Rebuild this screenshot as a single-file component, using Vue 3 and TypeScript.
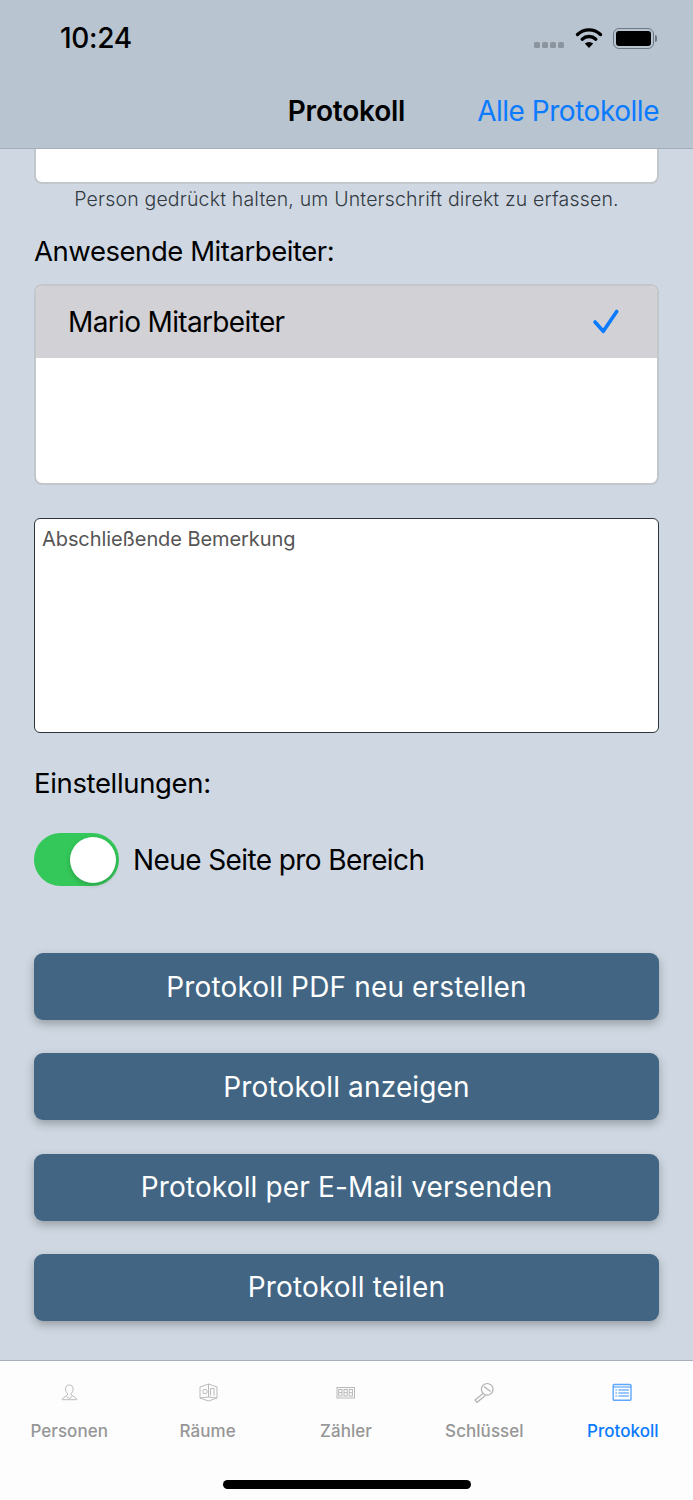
<script setup lang="ts">
const buttons = [
  'Protokoll PDF neu erstellen',
  'Protokoll anzeigen',
  'Protokoll per E-Mail versenden',
  'Protokoll teilen',
]

const tabs = [
  { key: 'person', label: 'Personen' },
  { key: 'room', label: 'Räume' },
  { key: 'meter', label: 'Zähler' },
  { key: 'key', label: 'Schlüssel' },
  { key: 'log', label: 'Protokoll' },
]
</script>

<template>
  <div class="screen">
    <header class="topbar">
      <div class="status">
        <span class="time">10:24</span>
        <div class="status__icons">
          <div class="signal"><i /><i /><i /><i /></div>
          <svg class="wifi" width="28" height="22" viewBox="0 0 28 22">
            <path d="M2.5 7.5a16.5 16.5 0 0 1 23 0" fill="none" stroke="#000" stroke-width="3.4" stroke-linecap="round" />
            <path d="M7.2 12.2a10 10 0 0 1 13.6 0" fill="none" stroke="#000" stroke-width="3.4" stroke-linecap="round" />
            <path d="M14 21l-4.2-4.4a6 6 0 0 1 8.4 0z" fill="#000" />
          </svg>
          <div class="battery"><div class="battery__fill" /></div>
          <div class="battery__cap" />
        </div>
      </div>
      <div class="navbar">
        <span class="navbar__title">Protokoll</span>
        <span class="navbar__action">Alle Protokolle</span>
      </div>
    </header>

    <main class="content">
      <div class="sign-box" />
      <p class="hint">Person gedrückt halten, um Unterschrift direkt zu erfassen.</p>

      <h2 class="label label--staff">Anwesende Mitarbeiter:</h2>
      <div class="list">
        <div class="list__row">
          <span>Mario Mitarbeiter</span>
          <svg width="30" height="30" viewBox="0 0 30 30">
            <path d="M5 15l8.300 9.300L26.700 4.500" fill="none" stroke="#0a7aff" stroke-width="3.600" stroke-linecap="round" stroke-linejoin="round" />
          </svg>
        </div>
      </div>

      <div class="remark">Abschließende Bemerkung</div>

      <h2 class="label label--settings">Einstellungen:</h2>
      <div class="setting">
        <div class="toggle"><div class="toggle__knob" /></div>
        <span>Neue Seite pro Bereich</span>
      </div>

      <div class="actions">
        <button v-for="b in buttons" :key="b" class="action" type="button">{{ b }}</button>
      </div>
    </main>

    <footer class="tabbar">
      <nav class="tabs">
        <div v-for="t in tabs" :key="t.key" class="tab" :class="{ 'tab--active': t.key === 'log' }">
          <svg class="tab__icon" width="28" height="28" viewBox="0 0 28 28" fill="none" stroke="currentColor" stroke-width="0.900">
            <template v-if="t.key === 'person'">
              <path d="M10.500 11c0-2.500 1.500-4 3.800-4s3.800 1.500 3.800 4c0 2-.8 3.500-1.800 4.500v1.500l4.500 3c.6.400.9 1 .9 1.700H7.300c0-.7.300-1.300.9-1.700l4.300-3v-1.500c-1-1-2-2.500-2-4.500z" />
              <path d="M11.500 18.500l2.800 2 2.800-2" />
            </template>
            <template v-else-if="t.key === 'room'">
              <path d="M14.500 6l8.500 3v11l-8.500 3-8.500-3V9z" />
              <path d="M14.500 6v13M6 20l8.500-1 8.500 1" />
              <circle cx="11" cy="13.500" r="2.200" />
              <path d="M16.500 17.500v-7h3.500v7" />
            </template>
            <template v-else-if="t.key === 'meter'">
              <rect x="5" y="9.500" width="17.500" height="10.500" />
              <rect x="6.800" y="11.500" width="3.200" height="6.500" />
              <rect x="12" y="11.500" width="3.200" height="6.500" />
              <rect x="17.200" y="11.500" width="3.200" height="6.500" />
              <path d="M6.800 14.700h3.200M12 14.700h3.200M17.200 14.700h3.200" />
            </template>
            <template v-else-if="t.key === 'key'">
              <circle cx="17.200" cy="11.300" r="5.800" stroke-width="1.200" />
              <path d="M14 8.500l6.500 5" stroke-width="1.200" />
              <path d="M13 15.500l-8 6.500 2 2.300 8.500-6.800" stroke-width="1.200" />
            </template>
            <template v-else>
              <rect x="4.200" y="6.500" width="17.800" height="15.800" rx="1" stroke-width="1.400" opacity="0.65" />
              <path d="M4.200 9H22" stroke-width="1.200" opacity="0.65" />
              <path d="M9.400 12h10.500M9.400 15h10.500M9.400 18h10.500M6.400 12h1.500M6.400 15h1.500M6.400 18h1.500" stroke-width="1.400" opacity="0.55" />
            </template>
          </svg>
          <span class="tab__label">{{ t.label }}</span>
        </div>
      </nav>
      <div class="home-bar" />
    </footer>
  </div>
</template>

<style scoped>
.screen {
  display: flex;
  flex-direction: column;
  width: 693px;
  height: 1500px;
  overflow: hidden;
  background: #cfd8e2;
  font-family: Inter, "Liberation Sans", sans-serif;
  color: #000;
}

.topbar {
  flex: none;
  height: 149px;
  box-sizing: border-box;
  background: #b8c4d0;
  border-bottom: 1px solid #a5afba;
}

.status {
  display: flex;
  align-items: center;
  justify-content: space-between;
  height: 76px;
  padding: 0 36px 0 60px;
}

.time {
  font-size: 28px;
  font-weight: 500;
  letter-spacing: -0.3px;
}

.status__icons {
  display: flex;
  align-items: center;
}

.signal {
  display: flex;
  gap: 1.500px;
  margin: 14px 11px 0 0;
}

.signal i {
  width: 6.500px;
  height: 6.500px;
  border-radius: 1.500px;
  background: #8b959f;
}

.wifi {
  margin-right: 10px;
}

.battery {
  box-sizing: border-box;
  width: 41px;
  height: 21px;
  padding: 2px;
  border: 1.500px solid #6f7780;
  border-radius: 6px;
}

.battery__fill {
  height: 100%;
  border-radius: 3px;
  background: #000;
}

.battery__cap {
  width: 2px;
  height: 7px;
  margin-left: 1px;
  border-radius: 0 2px 2px 0;
  background: #6f7780;
}

.navbar {
  position: relative;
  display: flex;
  align-items: center;
  justify-content: center;
  height: 70px;
}

.navbar__title {
  font-size: 28px;
  font-weight: 600;
  letter-spacing: -0.2px;
}

.navbar__action {
  position: absolute;
  top: 50%;
  right: 34px;
  transform: translateY(-50%);
  font-size: 28px;
  letter-spacing: -0.47px;
  color: #0a7aff;
}

.content {
  flex: 1;
  display: flex;
  flex-direction: column;
  padding: 0 34px;
}

.sign-box {
  height: 35px;
  box-sizing: border-box;
  background: #fff;
  border: 2px solid #c3c6ca;
  border-top: none;
  border-radius: 0 0 8px 8px;
}

.hint {
  margin: 3px 0 0;
  height: 24px;
  line-height: 24px;
  text-align: center;
  font-size: 19.500px;
  font-weight: 300;
  letter-spacing: 0.17px;
  color: #333a42;
}

.label {
  margin: 0;
  font-size: 27.500px;
  font-weight: 400;
  line-height: 34px;
  letter-spacing: -0.45px;
}

.label--staff {
  margin-top: 23px;
}

.list {
  height: 201px;
  margin-top: 16px;
  box-sizing: border-box;
  overflow: hidden;
  background: #fff;
  border: 2px solid #c3c6ca;
  border-radius: 8px;
}

.list__row {
  display: flex;
  align-items: center;
  justify-content: space-between;
  height: 72px;
  padding: 0 37px 0 32px;
  background: #d2d1d6;
  font-size: 28px;
  letter-spacing: -0.65px;
}

.remark {
  height: 215px;
  margin-top: 33px;
  padding: 8px 7px;
  box-sizing: border-box;
  background: #fff;
  border: 1.500px solid #2f343b;
  border-radius: 6px;
  font-size: 20px;
  line-height: 25px;
  letter-spacing: -0.08px;
  color: #555;
}

.label--settings {
  margin-top: 33px;
  letter-spacing: -0.35px;
}

.setting {
  display: flex;
  align-items: center;
  gap: 14px;
  margin-top: 33px;
  font-size: 28px;
  letter-spacing: -0.6px;
}

.toggle {
  display: flex;
  align-items: center;
  justify-content: flex-end;
  width: 85px;
  height: 53px;
  padding: 0 3px;
  box-sizing: border-box;
  border-radius: 27px;
  background: #34c759;
}

.toggle__knob {
  width: 46px;
  height: 46px;
  border-radius: 50%;
  background: #fff;
  box-shadow: 0 2px 5px rgba(0, 0, 0, 0.2);
}

.actions {
  display: flex;
  flex-direction: column;
  gap: 33.300px;
  margin-top: 67px;
}

.action {
  height: 67px;
  padding: 0;
  border: none;
  border-radius: 9px;
  background: #416583;
  box-shadow: 0 4px 10px rgba(0, 0, 0, 0.28);
  font-family: inherit;
  font-size: 28px;
  letter-spacing: 0.15px;
  color: #fff;
}

.tabbar {
  flex: none;
  height: 140px;
  box-sizing: border-box;
  background: #fdfdfd;
  border-top: 1px solid #a9afba;
}

.tabs {
  display: grid;
  grid-template-columns: repeat(5, 1fr);
  padding-right: 1px;
}

.tab {
  display: flex;
  flex-direction: column;
  align-items: center;
  padding-top: 17px;
  color: #b2b2b2;
}

.tab--active {
  color: #0a7aff;
}

.tab__icon {
  display: block;
}

.tab__label {
  margin-top: 14px;
  font-size: 17px;
  font-weight: 500;
  line-height: 22px;
  letter-spacing: 0.05px;
  color: #969696;
}

.tab--active .tab__label {
  color: #0a7aff;
}

.home-bar {
  width: 248px;
  height: 9px;
  margin: 38px auto 0;
  border-radius: 5px;
  background: #000;
}
</style>
